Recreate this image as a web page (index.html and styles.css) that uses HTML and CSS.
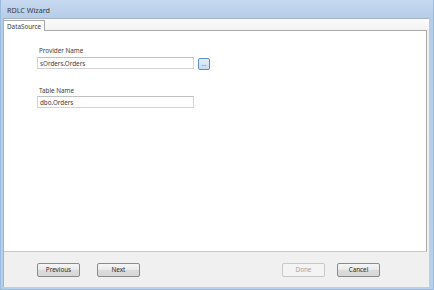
FILE: index.html
```html
<!DOCTYPE html>
<html>
<head>
<meta charset="utf-8">
<link rel="stylesheet" href="styles.css">
</head>
<body>
<div class="window">
  <div class="titlebar">RDLC Wizard</div>
  <div class="client">
    <div class="tabstrip">
      <div class="tab">DataSource</div>
    </div>
    <div class="panel">
      <div class="field">
        <div class="label">Provider Name</div>
        <div class="row">
          <div class="input">sOrders.Orders</div>
          <div class="browse">...</div>
        </div>
      </div>
      <div class="field">
        <div class="label">Table Name</div>
        <div class="row">
          <div class="input">dbo.Orders</div>
        </div>
      </div>
    </div>
    <div class="footer">
      <div class="btn prev">Previous</div>
      <div class="btn next">Next</div>
      <div class="spacer"></div>
      <div class="btn disabled">Done</div>
      <div class="btn cancel">Cancel</div>
    </div>
  </div>
</div>
</body>
</html>
```
FILE: styles.css
```css
html, body {
  margin: 0;
  padding: 0;
  background: #ffffff;
}
body {
  font-family: "Noto Sans", "Liberation Sans", Arial, sans-serif;
  font-size: 6.3px;
  color: #3c3c3c;
}
.window {
  width: 434px;
  height: 290px;
  box-sizing: border-box;
  display: flex;
  flex-direction: column;
  background: linear-gradient(#c6d9ef, #b6cde8 18px, #b8cfea);
  border-left: 1px solid #9bbbe0;
  border-right: 1px solid #9bbbe0;
  border-bottom: 1px solid #9cbde2;
  padding: 0 4px 2px 2px;
}
.titlebar {
  height: 18px;
  flex: none;
  display: flex;
  align-items: center;
  padding-left: 4px;
  padding-top: 2px;
  box-sizing: border-box;
  font-size: 7.2px;
  color: #3a3a3a;
}
.client {
  flex: 1;
  display: flex;
  flex-direction: column;
  background: #f0f0f0;
  border-left: 1px solid #a6b2c0;
  border-top: 1px solid #a6b2c0;
}
.tabstrip {
  height: 11px;
  flex: none;
  display: flex;
  align-items: flex-end;
  background: linear-gradient(#fbfbfb, #f3f3f3);
}
.tab {
  width: 41px;
  height: 11px;
  box-sizing: border-box;
  background: #ffffff;
  border: 1px solid #a9a9a9;
  border-bottom: none;
  border-left: none;
  padding-left: 3px;
  display: flex;
  align-items: center;
  position: relative;
  top: 1px;
}
.panel {
  flex: 1;
  background: #ffffff;
  border-top: 1px solid #a9a9a9;
  border-right: 1px solid #a9a9a9;
  border-bottom: 1px solid #c9c9c9;
  margin-right: 2px;
  padding: 16px 0 0 33px;
  display: flex;
  flex-direction: column;
  gap: 17px;
}
.field {
  display: flex;
  flex-direction: column;
  gap: 1px;
}
.label {
  padding-left: 2px;
  height: 8px;
  line-height: 8px;
}
.row {
  display: flex;
  align-items: center;
  gap: 4px;
}
.input {
  width: 157px;
  height: 12px;
  box-sizing: border-box;
  border: 1px solid #d3d3d3;
  border-top-color: #c0c0c0;
  background: #ffffff;
  padding-left: 2px;
  display: flex;
  align-items: center;
}
.browse {
  width: 12px;
  height: 12px;
  margin-top: 2px;
  box-sizing: border-box;
  border: 1px solid #5a8ec6;
  border-radius: 2px;
  background: linear-gradient(#e4eef9, #c6dbf1);
  color: #555;
  font-size: 6px;
  display: flex;
  align-items: center;
  justify-content: center;
  line-height: 1;
}
.footer {
  height: 35px;
  flex: none;
  display: flex;
  align-items: center;
  padding: 0 0 0 33px;
  gap: 17px;
}
.spacer {
  flex: 1;
}
.btn {
  width: 43px;
  height: 14px;
  box-sizing: border-box;
  border: 1px solid #8a8a8a;
  border-radius: 2px;
  background: linear-gradient(#f6f6f6, #e9e9e9 50%, #dcdcdc 51%, #d6d6d6);
  display: flex;
  align-items: center;
  justify-content: center;
  color: #2a2a2a;
}
.btn.cancel {
  margin-right: 49px;
  margin-left: -5px;
}
.btn.disabled {
  border-color: #c8c8c8;
  background: #f4f4f4;
  color: #a3a3a3;
}
```
